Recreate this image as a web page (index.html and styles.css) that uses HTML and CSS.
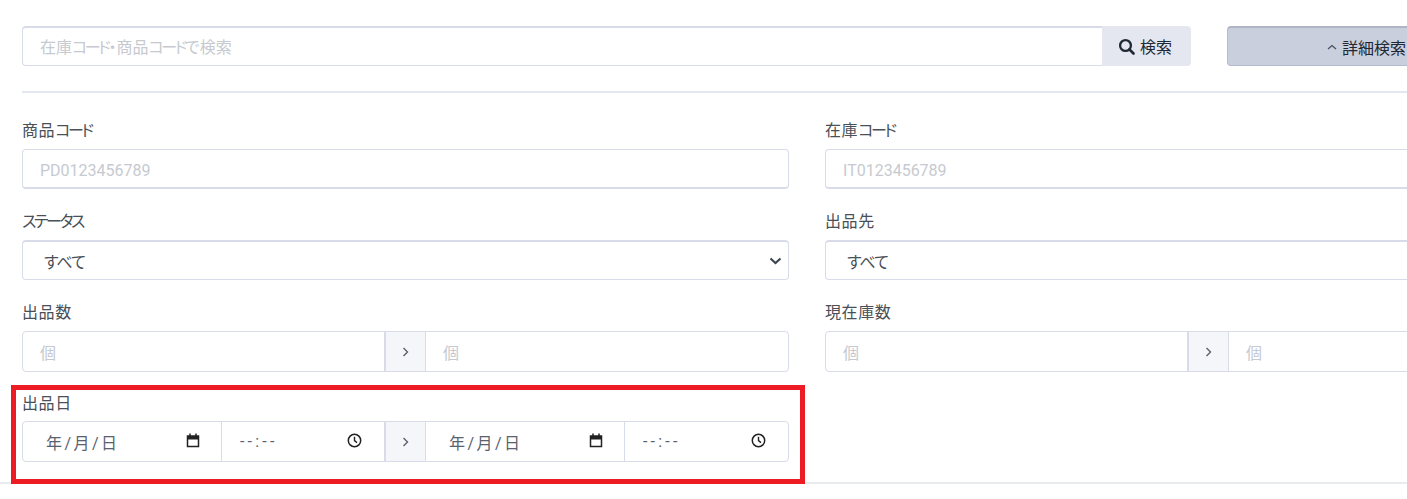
FILE: index.html
```html
<!DOCTYPE html>
<html lang="ja">
<head>
    <meta charset="UTF-8">
    <title>在庫検索</title>
    <link rel="stylesheet" href="styles.css">
</head>
<body>
    <div class="page">
        <div class="search-row">
            <div class="search-group">
                <div class="input search-input ph"><span>在庫<span class="kana">コード</span>・商品<span class="kana">コード</span>で検索</span></div>
                <button class="search-btn">
                    <svg width="17" height="17" viewBox="0 0 17 17"><circle cx="7.5" cy="7.5" r="5.4" fill="none" stroke="#1f2933" stroke-width="2.3"/><path d="M11.5 11.5L15.5 15.5" stroke="#1f2933" stroke-width="2.6" stroke-linecap="round"/></svg>
                    検索
                </button>
            </div>
            <button class="detail-btn">
                <svg class="caret" width="10" height="6" viewBox="0 0 10 6"><path d="M1 5L5 1.5L9 5" fill="none" stroke="#4a5260" stroke-width="1.3"/></svg>
                詳細検索
            </button>
        </div>
        <hr class="rule">
        <div class="form-grid">
            <div class="field">
                <div class="label">商品<span class="kana">コード</span></div>
                <div class="input input-b ph">PD0123456789</div>
            </div>
            <div class="field">
                <div class="label">在庫<span class="kana">コード</span></div>
                <div class="input input-b ph">IT0123456789</div>
            </div>
            <div class="field">
                <div class="label"><span class="kana">ステータス</span></div>
                <div class="input select"><span class="all">すべて</span>
                    <svg class="chevron" width="13" height="8" viewBox="0 0 13 8"><path d="M1.5 1.5L6.5 6L11.5 1.5" fill="none" stroke="#3f4650" stroke-width="2.2"/></svg>
                </div>
            </div>
            <div class="field">
                <div class="label">出品先</div>
                <div class="input select"><span class="all">すべて</span></div>
            </div>
            <div class="field">
                <div class="label">出品数</div>
                <div class="range">
                    <div class="range-part ph">個</div>
                    <div class="range-sep"><svg width="7" height="10" viewBox="0 0 7 10"><path d="M1.5 1L5.5 5L1.5 9" fill="none" stroke="#5a6270" stroke-width="1.4"/></svg></div>
                    <div class="range-part ph">個</div>
                </div>
            </div>
            <div class="field">
                <div class="label">現在庫数</div>
                <div class="range">
                    <div class="range-part ph">個</div>
                    <div class="range-sep"><svg width="7" height="10" viewBox="0 0 7 10"><path d="M1.5 1L5.5 5L1.5 9" fill="none" stroke="#5a6270" stroke-width="1.4"/></svg></div>
                    <div class="range-part ph">個</div>
                </div>
            </div>
            <div class="field field-date">
                <div class="label">出品日</div>
                <div class="range range-date">
                    <div class="range-part dt date"><span class="ymd">年 / 月 / 日</span>
                        <svg class="dt-icon" width="14" height="15" viewBox="0 0 14 15"><path d="M1.5 3h11v10.5h-11z" fill="none" stroke="#222" stroke-width="1.5"/><path d="M1 3h12v3.5h-12z" fill="#222"/><path d="M4 .5v3M10 .5v3" stroke="#222" stroke-width="1.5"/></svg>
                    </div>
                    <div class="range-part dt time"><span class="hm">--:--</span>
                        <svg class="dt-icon" width="15" height="15" viewBox="0 0 15 15"><circle cx="7.5" cy="7.5" r="6.2" fill="none" stroke="#222" stroke-width="1.5"/><path d="M7.5 3.8V7.6L10 9.6" fill="none" stroke="#222" stroke-width="1.4"/></svg>
                    </div>
                    <div class="range-sep"><svg width="7" height="10" viewBox="0 0 7 10"><path d="M1.5 1L5.5 5L1.5 9" fill="none" stroke="#5a6270" stroke-width="1.4"/></svg></div>
                    <div class="range-part dt date"><span class="ymd">年 / 月 / 日</span>
                        <svg class="dt-icon" width="14" height="15" viewBox="0 0 14 15"><path d="M1.5 3h11v10.5h-11z" fill="none" stroke="#222" stroke-width="1.5"/><path d="M1 3h12v3.5h-12z" fill="#222"/><path d="M4 .5v3M10 .5v3" stroke="#222" stroke-width="1.5"/></svg>
                    </div>
                    <div class="range-part dt time last"><span class="hm">--:--</span>
                        <svg class="dt-icon" width="15" height="15" viewBox="0 0 15 15"><circle cx="7.5" cy="7.5" r="6.2" fill="none" stroke="#222" stroke-width="1.5"/><path d="M7.5 3.8V7.6L10 9.6" fill="none" stroke="#222" stroke-width="1.4"/></svg>
                    </div>
                </div>
            </div>
        </div>
        <hr class="rule rule-bottom">
        <div class="highlight"></div>
    </div>
</body>
</html>
```
FILE: styles.css
```css
html, body {
    margin: 0;
    padding: 0;
    background: #fff;
}

body {
    font-family: Roboto, "Noto Sans CJK JP", sans-serif;
    font-size: 16px;
    font-feature-settings: "palt";
    color: #495057;
}

/* the form is wider than the window, the right column is cut off */
.page {
    position: relative;
    width: 1407px;
    height: 499px;
    overflow: hidden;
    padding: 26px 0 0 22px;
    box-sizing: border-box;
}

.search-row {
    display: flex;
    gap: 36px;
    width: 1600px;
}

.search-group {
    display: flex;
    width: 1169px;
}

.input {
    box-sizing: border-box;
    height: 40px;
    border: 1px solid #d8dce8;
    border-top-width: 2px;
    border-radius: 4px;
    padding: 0 17px;
    display: flex;
    align-items: center;
    background: #fff;
    position: relative;
}

.input-b {
    border-top-width: 1px;
    border-bottom-width: 2px;
    padding-top: 3px;
}

.ph {
    color: #c6cad0;
}

/* katakana sits much tighter than the font's own spacing */
.kana {
    letter-spacing: -2.4px;
}

.search-input {
    flex: 1;
    border-radius: 4px 0 0 4px;
    border-right: none;
    padding-bottom: 2px;
}

.search-btn {
    width: 89px;
    height: 40px;
    border: none;
    background: #e4e7ef;
    border-radius: 0 4px 4px 0;
    font: inherit;
    color: #1f2933;
    display: flex;
    align-items: center;
    justify-content: center;
    gap: 5px;
    padding: 0 3px 0 0;
}

.detail-btn {
    width: 200px;
    height: 40px;
    box-sizing: border-box;
    border: 1px solid #b5bccb;
    border-top: 2px solid #aeb5c5;
    background: #c9cfdc;
    border-radius: 4px;
    font: inherit;
    color: #1f2933;
    display: flex;
    align-items: center;
    gap: 5px;
    padding: 0 0 0 99px;
    white-space: nowrap;
}

.rule {
    border: none;
    border-top: 2px solid #e4e7ef;
    margin: 25px 0 0 0;
    width: 1385px;
}

.form-grid {
    display: grid;
    grid-template-columns: 767px 767px;
    column-gap: 36px;
    margin-top: 28px;
    row-gap: 23px;
}

.field-date {
    margin-top: -1px;
}

.label {
    height: 20px;
    line-height: 20px;
    margin-bottom: 8px;
    letter-spacing: 0.6px;
}

.select {
    padding-left: 21px;
}

.all {
    letter-spacing: -1px;
}

.chevron {
    position: absolute;
    right: 6px;
    top: 15px;
}

.range {
    display: flex;
    box-sizing: border-box;
    height: 41px;
    border: 1px solid #d8dce8;
    border-radius: 4px;
}

.range-part {
    flex: 1;
    display: flex;
    align-items: center;
    padding: 0 17px;
    justify-content: space-between;
}

.range-part:first-child {
    flex: 0 0 361px;
    box-sizing: border-box;
}

.range-sep {
    width: 42px;
    box-sizing: border-box;
    background: #f4f6f9;
    border-left: 2px solid #d8dce8;
    border-right: 1px solid #d8dce8;
    display: flex;
    align-items: center;
    justify-content: center;
}

.range-date {
    margin-top: -1px;
}

.dt {
    color: #5a6270;
    padding: 0 21px 0 23px;
}

.dt.date,
.dt.date:first-child {
    flex: 0 0 199px;
    box-sizing: border-box;
    border-right: 1px solid #d8dce8;
}

.dt.time {
    flex: 0 0 162px;
    box-sizing: border-box;
    padding-left: 18px;
    padding-right: 22px;
}

.dt.last {
    flex: 1;
}

.ymd {
    word-spacing: -1.5px;
}

.hm {
    letter-spacing: 3.2px;
}

.dt-icon {
    margin-top: -3px;
}

.rule-bottom {
    margin: 20px 0 0 -22px;
    width: 1407px;
    border-top-color: #e9ecef;
}

/* red annotation box drawn over the form */
.highlight {
    position: absolute;
    left: 11px;
    top: 385px;
    width: 794px;
    height: 99px;
    box-sizing: border-box;
    border: 5px solid #ed1c24;
}
```
